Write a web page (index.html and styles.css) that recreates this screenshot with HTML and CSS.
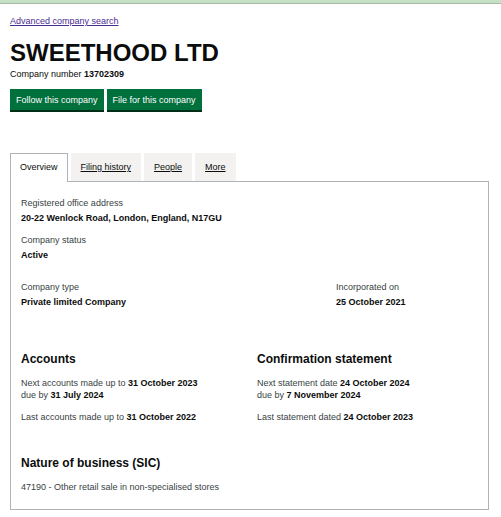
FILE: index.html
```html
<!DOCTYPE html>
<html lang="en">
<head>
  <meta charset="UTF-8">
  <meta name="viewport" content="width=device-width, initial-scale=1.0">
  <title>SWEETHOOD LTD overview</title>
  <link rel="stylesheet" href="styles.css">
</head>
<body>
  <div class="top-bar"></div>
  <div class="container">
    <a class="back-link" href="#">Advanced company search</a>

    <h1>SWEETHOOD LTD</h1>
    <p class="company-number">Company number <strong>13702309</strong></p>

    <div class="actions">
      <a class="button" href="#">Follow this company</a>
      <a class="button" href="#">File for this company</a>
    </div>

    <ul class="tabs">
      <li class="tab active"><a href="#">Overview</a></li>
      <li class="tab"><a href="#">Filing history</a></li>
      <li class="tab"><a href="#">People</a></li>
      <li class="tab"><a href="#">More</a></li>
    </ul>

    <div class="panel">
      <dl class="field">
        <dt>Registered office address</dt>
        <dd>20-22 Wenlock Road, London, England, N17GU</dd>
      </dl>
      <dl class="field">
        <dt>Company status</dt>
        <dd>Active</dd>
      </dl>

      <div class="row-type">
        <dl class="field">
          <dt>Company type</dt>
          <dd>Private limited Company</dd>
        </dl>
        <dl class="field">
          <dt>Incorporated on</dt>
          <dd>25 October 2021</dd>
        </dl>
      </div>

      <div class="row-halves">
        <div class="section">
          <h2>Accounts</h2>
          <p>Next accounts made up to <strong>31 October 2023</strong><br>due by <strong>31 July 2024</strong></p>
          <p>Last accounts made up to <strong>31 October 2022</strong></p>
        </div>
        <div class="section">
          <h2>Confirmation statement</h2>
          <p>Next statement date <strong>24 October 2024</strong><br>due by <strong>7 November 2024</strong></p>
          <p>Last statement dated <strong>24 October 2023</strong></p>
        </div>
      </div>

      <div class="section sic">
        <h2>Nature of business (SIC)</h2>
        <p>47190 - Other retail sale in non-specialised stores</p>
      </div>
    </div>
  </div>
</body>
</html>
```

FILE: styles.css
```css
body {
  font-family: "Liberation Sans", Arial, sans-serif;
  font-size: 9px;
  line-height: 12px;
  color: #0b0c0c;
  margin: 0;
  padding: 0;
  background-color: #fff;
}

.top-bar {
  height: 3px;
  background-color: #c5e1c5;
  border-bottom: 1px solid #a9b8a9;
}

.container {
  padding: 11px 12px 0 10px;
}

.back-link {
  color: #4c2c92;
  display: inline-block;
}

h1 {
  font-size: 24px;
  line-height: 24px;
  font-weight: 700;
  margin: 14px 0 3px;
}

.company-number {
  margin: 0;
}

.company-number strong {
  font-weight: 700;
}

.actions {
  display: flex;
  gap: 3px;
  margin-top: 9px;
}

.button {
  background-color: #00703c;
  color: #fff;
  text-decoration: none;
  padding: 5px 6px 4px;
  border-bottom: 2px solid #002d18;
  line-height: 12px;
}

.tabs {
  list-style: none;
  display: flex;
  gap: 3px;
  padding: 0;
  margin: 41px 0 0;
}

.tab {
  background-color: #f3f2f1;
  padding: 8px 10px;
}

.tab a {
  color: #0b0c0c;
}

.tab.active {
  background-color: #fff;
  border: 1px solid #b1b4b6;
  border-bottom: none;
  padding: 7px 9px 9px;
  margin-bottom: -1px;
}

.tab.active a {
  text-decoration: none;
}

.panel {
  border: 1px solid #b1b4b6;
  padding: 15px 10px 16px;
}

.field {
  margin: 0 0 10px;
}

.field dt {
  color: #383f43;
  margin-bottom: 3px;
}

.field dd {
  margin: 0;
  font-weight: 700;
}

.row-type {
  display: grid;
  grid-template-columns: 315px 1fr;
  margin-top: 20px;
}

.row-halves {
  display: grid;
  grid-template-columns: 236px 1fr;
  margin-top: 34px;
}

.section h2 {
  font-size: 12px;
  line-height: 14px;
  margin: 0 0 11px;
}

.section p {
  color: #383f43;
  margin: 0 0 10px;
}

.section strong {
  color: #0b0c0c;
}

.sic {
  margin-top: 23px;
}

.sic p {
  margin-bottom: 0;
}
```
